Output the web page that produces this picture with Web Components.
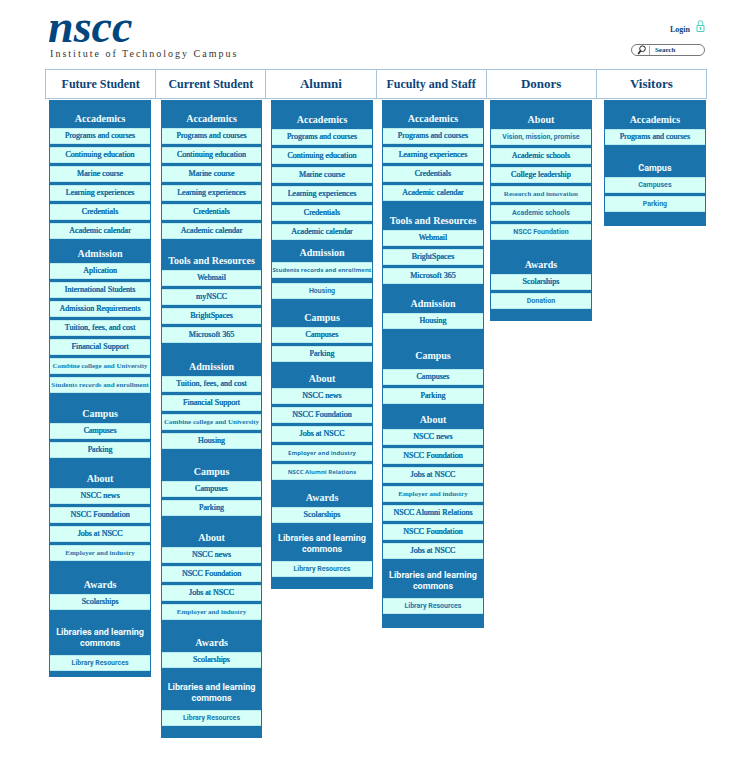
<!DOCTYPE html>
<html lang="en">
<head>
<meta charset="utf-8">
<meta name="viewport" content="width=device-width, initial-scale=1">
<title>NSCC Institute of Technology Campus</title>
<style>
  body { margin: 0; background: #fff; font-family: "Liberation Serif", serif; color: #0b4478; }
</style>
</head>
<body>
<site-map></site-map>
<script>
// A text cell link inside a group; kind: "" normal, "tight" for long serif labels, "sans" and "mini" for sans labels.
class MapItem extends HTMLElement {
  connectedCallback() {
    this.attachShadow({ mode: 'open' }).innerHTML = `
      <style>
        :host { display: block; }
        a { display: flex; align-items: center; justify-content: center; height: 16px; box-sizing: border-box;
            border: 1px solid #b9ecef; border-width: 1px 0; background: #d6fff7; color: #2076ae;
            text-decoration: none; white-space: nowrap; font-size: 8px; line-height: 12px;
            text-shadow: 0 0 0 #2076ae, 0 0 0 #2076ae; }
        :host([kind="tight"]) a { font-size: 7px; font-weight: 700; text-shadow: none; }
        :host([kind="sans"]) a { font: 700 7px/12px Roboto, sans-serif; text-shadow: none; padding-bottom: 1px; }
        :host([kind="mini"]) a { font: 700 6px/12px "Open Sans", sans-serif; text-shadow: none; }
      </style>
      <a href="#"><slot></slot></a>`;
  }
}
class MapGroup extends HTMLElement {
  connectedCallback() {
    this.attachShadow({ mode: 'open' }).innerHTML = `
      <style>
        :host { display: block; }
        h3 { margin: 0; box-sizing: border-box; display: flex; align-items: flex-end; justify-content: center;
             height: var(--head, 28px); padding-bottom: 3px; text-align: center; color: #f2fdff;
             font-size: 10px; line-height: 12px; font-weight: 700; }
        :host([raised]) h3 { padding-bottom: 7px; }
        :host([sans]) h3 { font: 700 9px/12px Roboto, sans-serif; }
        :host([library]) h3 { font: 700 9px/11px Roboto, sans-serif; padding-bottom: 6px; }
        :host([library]) span { max-width: 96px; }
        div { display: grid; gap: var(--gap, 3px); }
      </style>
      <h3><span>${this.getAttribute('label')}</span></h3>
      <div><slot></slot></div>`;
  }
}
class MapPanel extends HTMLElement {
  connectedCallback() {
    this.attachShadow({ mode: 'open' }).innerHTML = `
      <style>
        :host { display: block; background: #1a73ab; padding: 0 1px var(--tail, 12px); min-width: 0; }
      </style><slot></slot>`;
  }
}
class SiteTab extends HTMLElement {
  connectedCallback() {
    this.attachShadow({ mode: 'open' }).innerHTML = `
      <style>
        :host { display: block; border-left: 1px solid #a9c3d8; }
        a { display: flex; align-items: center; justify-content: center; height: 28px; color: #0b4478;
            text-decoration: none; white-space: nowrap; font-weight: 700; font-size: 12px; }
        :host([short]) a { font-size: 13px; }
      </style><a href="#"><slot></slot></a>`;
  }
}
class SiteHeader extends HTMLElement {
  connectedCallback() {
    this.attachShadow({ mode: 'open' }).innerHTML = `
      <style>
        :host { display: flex; justify-content: space-between; height: 69px; box-sizing: border-box; padding: 8px 2px 0 3px; }
        h1 { margin: 0; font-size: 46px; line-height: 38px; font-style: italic; font-weight: 700; color: #03467d; }
        p { margin: 0; padding: 0 2px; font-size: 10px; line-height: 15px; letter-spacing: 2px; color: #333; }
        .tools { display: flex; flex-direction: column; align-items: flex-end; gap: 9px; padding-top: 12px; }
        a { display: flex; align-items: flex-end; gap: 6px; color: #0b4478; text-decoration: none;
            font-size: 8px; font-weight: 700; line-height: 10px; height: 15px; }
        a svg { width: 9px; height: 13px; margin-bottom: 2px; }
        label { display: flex; align-items: center; box-sizing: border-box; width: 74px; height: 12px;
                border: 1px solid #777; border-radius: 6px; padding: 0 5px; }
        label svg { width: 9px; height: 10px; flex: none; }
        input { min-width: 0; flex: 1; height: 9px; margin-left: 3px; padding: 0 0 0 5px; border: 0;
                border-left: 1px solid #aaa; outline: 0; background: none; color: #0b4478;
                font: 700 7px/9px "Liberation Serif", serif; }
        input::placeholder { color: #0b4478; opacity: 1; }
      </style>
      <div><h1>nscc</h1><p>Institute of Technology Campus</p></div>
      <div class="tools">
        <a href="#">Login
          <svg viewBox="0 0 9 13" fill="none" stroke="#4fd0bd" aria-hidden="true"><path d="M1 5.5h7v6H1zM2.2 5.5V3a2.3 2.3 0 0 1 4.6 0v2.5"/><path d="M4.5 7v3M3.5 8h2"/></svg>
        </a>
        <label><svg viewBox="0 0 9 10" fill="none" stroke="#222" aria-hidden="true"><circle cx="5.5" cy="3.7" r="2.8"/><path d="M3.6 5.8 1.2 9" stroke-width="1.6"/></svg>
          <input type="search" placeholder="Search" aria-label="Search"></label>
      </div>`;
  }
}
const ACAD = ['Programs and courses', 'Continuing education', 'Marine course', 'Learning experiences', 'Credentials', 'Academic calendar'];
// Each group: label, heading height, items, variant, item gap.
const SITE = [
  { tab: 'Future Student', tail: 6, groups: [
    ['Accademics', 28, ACAD],
    ['Admission', 24, ['Aplication', 'International Students', 'Admission Requirements', 'Tuition, fees, and cost', 'Financial Support', 'tight:Combine college and University', 'tight:Students records and enrollment']],
    ['Campus', 30, ['Campuses', 'Parking']],
    ['About', 30, ['NSCC news', 'NSCC Foundation', 'Jobs at NSCC', 'tight:Employer and industry']],
    ['Awards', 33, ['Scolarships']],
    ['Libraries and learning commons', 45, ['sans:Library Resources'], 'library']] },
  { tab: 'Current Student', tail: 12, groups: [
    ['Accademics', 28, ACAD],
    ['Tools and Resources', 31, ['Webmail', 'myNSCC', 'BrightSpaces', 'Microsoft 365']],
    ['Admission', 33, ['Tuition, fees, and cost', 'Financial Support', 'tight:Combine college and University', 'Housing']],
    ['Campus', 32, ['Campuses', 'Parking']],
    ['About', 31, ['NSCC news', 'NSCC Foundation', 'Jobs at NSCC', 'tight:Employer and industry']],
    ['Awards', 32, ['Scolarships']],
    ['Libraries and learning commons', 42, ['sans:Library Resources'], 'library']] },
  { tab: 'Alumni', short: true, tail: 12, groups: [
    ['Accademics', 29, ACAD],
    ['Admission', 22, ['mini:Students records and enrollment', 'sans:Housing'], '', 5],
    ['Campus', 28, ['Campuses', 'Parking']],
    ['About', 26, ['NSCC news', 'NSCC Foundation', 'Jobs at NSCC', 'mini:Employer and industry', 'mini:NSCC Alumni Relations']],
    ['Awards', 27, ['Scolarships']],
    ['Libraries and learning commons', 38, ['sans:Library Resources'], 'library']] },
  { tab: 'Fuculty and Staff', tail: 14, groups: [
    ['Accademics', 28, ['Programs and courses', 'Learning experiences', 'Credentials', 'Academic calendar']],
    ['Tools and Resources', 29, ['Webmail', 'BrightSpaces', 'Microsoft 365']],
    ['Admission', 29, ['Housing']],
    ['Campus', 40, ['Campuses', 'Parking'], 'raised'],
    ['About', 25, ['NSCC news', 'NSCC Foundation', 'Jobs at NSCC', 'tight:Employer and industry', 'NSCC Alumni Relations', 'NSCC Foundation', 'Jobs at NSCC']],
    ['Libraries and learning commons', 39, ['sans:Library Resources'], 'library']] },
  { tab: 'Donors', short: true, tail: 12, groups: [
    ['About', 29, ['sans:Vision, mission, promise', 'Academic schools', 'College leadership', 'tight:Research and innovation', 'sans:Academic schools', 'sans:NSCC Foundation']],
    ['Awards', 34, ['Scolarships', 'sans:Donation']]] },
  { tab: 'Visitors', short: true, tail: 14, groups: [
    ['Accademics', 29, ['Programs and courses']],
    ['Campus', 32, ['sans:Campuses', 'sans:Parking'], 'sans']] }
];
const item = text => {
  const [, kind, label] = text.match(/^(?:(tight|sans|mini):)?(.*)$/);
  return `<map-item${kind ? ` kind="${kind}"` : ''}>${label}</map-item>`;
};
const group = ([label, head, items, flag = '', gap = 3]) =>
  `<map-group label="${label}" ${flag} style="--head:${head}px;--gap:${gap}px">${items.map(item).join('')}</map-group>`;
class SiteMap extends HTMLElement {
  connectedCallback() {
    this.attachShadow({ mode: 'open' }).innerHTML = `
      <style>
        :host { display: block; padding: 0 6%; }
        nav { display: grid; grid-template-columns: repeat(6, minmax(0, 1fr)); border: 1px solid #a9c3d8; border-left: 0; }
        main { display: grid; align-items: start; padding: 1px 0 29px;
               grid-template-columns: 4fr 102fr 10fr 101fr 9fr 102fr 9fr 102fr 6fr 102fr 12fr 102fr 1fr; }
        map-panel:nth-child(1) { grid-column: 2; }
        map-panel:nth-child(2) { grid-column: 4; }
        map-panel:nth-child(3) { grid-column: 6; }
        map-panel:nth-child(4) { grid-column: 8; }
        map-panel:nth-child(5) { grid-column: 10; }
        map-panel:nth-child(6) { grid-column: 12; }
        map-panel { grid-row: 1; }
      </style>
      <site-header></site-header>
      <nav>${SITE.map(c => `<site-tab ${c.short ? 'short' : ''}>${c.tab}</site-tab>`).join('')}</nav>
      <main>${SITE.map(c => `<map-panel style="--tail:${c.tail}px">${c.groups.map(group).join('')}</map-panel>`).join('')}</main>`;
  }
}
customElements.define('map-item', MapItem);
customElements.define('map-group', MapGroup);
customElements.define('map-panel', MapPanel);
customElements.define('site-tab', SiteTab);
customElements.define('site-header', SiteHeader);
customElements.define('site-map', SiteMap);
</script>
</body>
</html>
